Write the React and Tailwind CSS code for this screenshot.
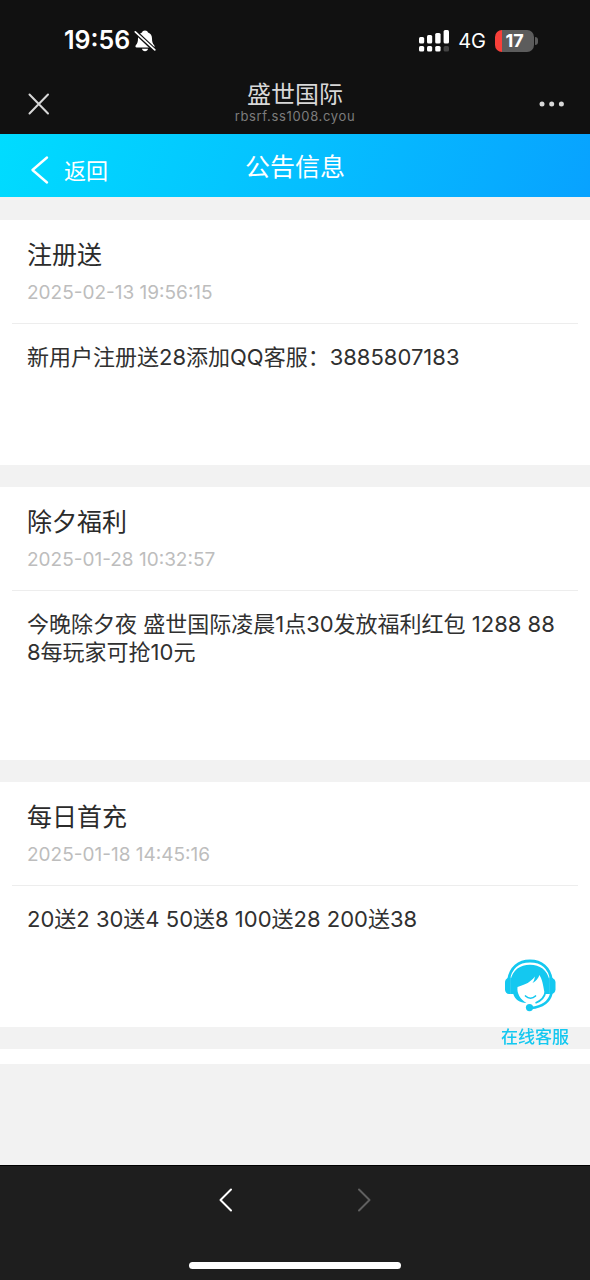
import { useState } from 'react';

const notices = [
  {
    title: '注册送',
    date: '2025-02-13 19:56:15',
    body: '新用户注册送28添加QQ客服：3885807183',
  },
  {
    title: '除夕福利',
    date: '2025-01-28 10:32:57',
    body: '今晚除夕夜 盛世国际凌晨1点30发放福利红包 1288 888每玩家可抢10元',
  },
  {
    title: '每日首充',
    date: '2025-01-18 14:45:16',
    body: '20送2 30送4 50送8 100送28 200送38',
  },
];

function MutedBellIcon() {
  return (
    <svg width="22" height="24" viewBox="0 0 22 24" fill="none" aria-hidden="true">
      <path
        d="M11 1.5C9.4 1.5 8.3 2.3 8 3.4C5.2 4.3 4 6.6 4 9.6C4 13.2 3.3 14.6 1.8 16.2C1.1 17 1.4 18.4 2.6 18.4H19.4C20.6 18.4 20.9 17 20.2 16.2C18.7 14.6 18 13.2 18 9.6C18 6.6 16.8 4.3 14 3.4C13.7 2.3 12.6 1.5 11 1.5Z"
        fill="#fff"
      />
      <path d="M8 19.8H14C13.8 21.4 12.6 22.2 11 22.2C9.4 22.2 8.2 21.4 8 19.8Z" fill="#fff" />
      <path d="M1 2.6L21 21.4" stroke="#111" strokeWidth="4.2" />
      <path d="M1.3 2.8L20.8 20.8" stroke="#fff" strokeWidth="1.7" strokeLinecap="round" />
    </svg>
  );
}

function SignalIcon() {
  return (
    <svg width="32" height="22" viewBox="0 0 32 22" fill="#fff" aria-hidden="true">
      <rect x="1" y="7" width="5.2" height="6.6" rx="1.5" />
      <rect x="9" y="5" width="5.2" height="8.6" rx="1.5" />
      <rect x="17.2" y="3" width="5.4" height="10.6" rx="1.5" />
      <rect x="25.6" y="0" width="5.4" height="13.6" rx="1.5" />
      <rect x="1" y="16" width="5.2" height="5.4" rx="1.5" />
      <rect x="9" y="16" width="5.2" height="5.4" rx="1.5" />
      <rect x="17.2" y="16" width="5.4" height="5.4" rx="1.5" />
      <rect x="25.6" y="16" width="5.4" height="5.4" rx="1.5" fill="#444" />
    </svg>
  );
}

function StatusBar() {
  return (
    <div className="flex h-[74px] items-center justify-between pt-2 pr-[52px] pl-16 text-white">
      <div className="flex items-center gap-1">
        <span className="text-[25px] font-semibold">19:56</span>
        <MutedBellIcon />
      </div>
      <div className="flex items-center gap-2">
        <SignalIcon />
        <span className="text-xl">4G</span>
        <div className="ml-px flex items-center gap-px">
          <div className="flex h-[22px] w-[39px] items-center justify-center rounded-[7px] bg-linear-to-r from-[#f8403a] from-17% to-[#5c5c5c] to-17% text-lg font-bold">
            17
          </div>
          <span className="h-2 w-[3px] rounded-r-full bg-[#5c5c5c]" />
        </div>
      </div>
    </div>
  );
}

function BrowserBar() {
  return (
    <div className="grid h-[60px] grid-cols-[1fr_auto_1fr] items-center px-6 text-[#d8d8d8]">
      <button type="button" aria-label="关闭" className="justify-self-start p-1">
        <svg width="22" height="22" viewBox="0 0 22 22" fill="none" stroke="currentColor" strokeWidth="2" strokeLinecap="round">
          <path d="M1.5 1.5L20 20.5M20 1.5L1.5 20.5" />
        </svg>
      </button>
      <div className="flex flex-col items-center">
        <span className="text-2xl leading-6">盛世国际</span>
        <span className="text-[13px] leading-[18px] tracking-wider text-[#7d7d7d]">rbsrf.ss1008.cyou</span>
      </div>
      <button type="button" aria-label="更多" className="justify-self-end">
        <svg width="28" height="8" viewBox="0 0 28 8" fill="currentColor">
          <circle cx="4" cy="4" r="2.5" />
          <circle cx="13.7" cy="4" r="2.5" />
          <circle cx="23.4" cy="4" r="2.5" />
        </svg>
      </button>
    </div>
  );
}

function PageHeader() {
  return (
    <header className="grid h-[63px] grid-cols-[1fr_auto_1fr] items-center bg-linear-[110deg] from-[#00dcff] via-[#05c0ff] to-[#08a2ff] px-7 pt-1 text-white">
      <a href="#back" className="flex items-center gap-3 pt-1 text-[22px]">
        <svg width="24" height="30" viewBox="0 0 24 30" fill="none" stroke="currentColor" strokeWidth="2.4" strokeLinecap="round" strokeLinejoin="round">
          <path d="M19 2.5L4.5 15L19 27.5" />
        </svg>
        <span className="pt-1">返回</span>
      </a>
      <h1 className="text-[25px]">公告信息</h1>
    </header>
  );
}

function NoticeCard({ title, date, body }) {
  return (
    <article className="bg-white px-3 pb-[94px]">
      <div className="border-b border-[#ededed] px-[15px] pt-[17px] pb-[14px]">
        <h2 className="text-[25px] leading-9 text-[#2b2b2b]">{title}</h2>
        <time className="block pt-1 text-[19px] leading-8 text-[#bdbdbd]">{date}</time>
      </div>
      <p className="px-[15px] pt-[19px] text-[22px] leading-7 break-all text-[#303030]">{body}</p>
    </article>
  );
}

function ServiceButton() {
  return (
    <button type="button" className="fixed right-[21px] bottom-[231px] flex flex-col items-center gap-[13px] text-[#14c8f0]">
      <svg width="54" height="54" viewBox="0 0 54 54" fill="none" aria-hidden="true" className="mr-2">
        <path d="M4.5 22C6.5 9.5 14.5 3 26 3C37.5 3 45.5 9.5 47.5 22" stroke="currentColor" strokeWidth="2.8" />
        <path
          d="M6.5 36V22C9 12 16 6.8 26 6.8C36 6.8 43 12 45.5 22V36H41C39.5 32 39.5 26 37 20L35.5 17C34.5 20 32 23.5 28.5 25C30 23 30.6 21 30.8 18.5C27 24 21.5 26.5 13.5 29C12.8 35.5 16 41 22.5 45C15.5 44.5 11 41.5 9.3 36Z"
          fill="currentColor"
        />
        <path d="M6.8 19.5V36H5C2.8 36 1 34 1 31.5V24.5C1 21.5 3 19.5 6.8 19.5Z" fill="currentColor" />
        <path d="M45.2 19.5V36H47C49.5 36 51.5 34 51.5 31.5V24.5C51.5 21.5 49 19.5 45.2 19.5Z" fill="currentColor" />
        <path d="M47.5 35C45.5 43.5 38 49 27 50" stroke="currentColor" strokeWidth="2.6" />
        <path d="M41.5 34C40.5 39 37 43 31.5 45" stroke="currentColor" strokeWidth="1.8" />
        <path d="M21.5 38C24.5 40.8 28.5 40.8 31.5 38" stroke="currentColor" strokeWidth="1.7" strokeLinecap="round" />
        <circle cx="25.5" cy="49.6" r="3.6" fill="currentColor" />
      </svg>
      <span className="text-[17px] leading-6 font-medium">在线客服</span>
    </button>
  );
}

function BottomBar({ canGoForward }) {
  return (
    <footer className="flex h-[115px] flex-col items-center justify-between border-t border-black bg-[#1e1e1e] pt-[21px] pb-[11px]">
      <nav className="flex gap-[114px] text-white">
        <button type="button" aria-label="后退" className="w-6">
          <svg width="24" height="26" viewBox="0 0 24 26" fill="none" stroke="currentColor" strokeWidth="2" strokeLinecap="round" strokeLinejoin="round">
            <path d="M17 2.5L6.5 13L17 23.5" />
          </svg>
        </button>
        <button type="button" aria-label="前进" disabled={!canGoForward} className="w-6 disabled:text-[#606060]">
          <svg width="24" height="26" viewBox="0 0 24 26" fill="none" stroke="currentColor" strokeWidth="2" strokeLinecap="round" strokeLinejoin="round">
            <path d="M7 2.5L17.5 13L7 23.5" />
          </svg>
        </button>
      </nav>
      <div className="h-[7px] w-[212px] rounded-full bg-white" />
    </footer>
  );
}

export default function App() {
  const [canGoForward] = useState(false);

  return (
    <div className="flex min-h-screen flex-col bg-[#f2f2f2] font-['Inter','Noto_Sans_CJK_SC',sans-serif]">
      <div className="bg-[#111]">
        <StatusBar />
        <BrowserBar />
      </div>
      <PageHeader />

      <main className="flex-1">
        <div className="flex flex-col gap-[22px] pt-[23px]">
          {notices.map((n) => (
            <NoticeCard key={n.title} {...n} />
          ))}
          {/* end of list spacer */}
          <div className="h-[15px] bg-white" />
        </div>
      </main>

      <ServiceButton />
      <BottomBar canGoForward={canGoForward} />
    </div>
  );
}
